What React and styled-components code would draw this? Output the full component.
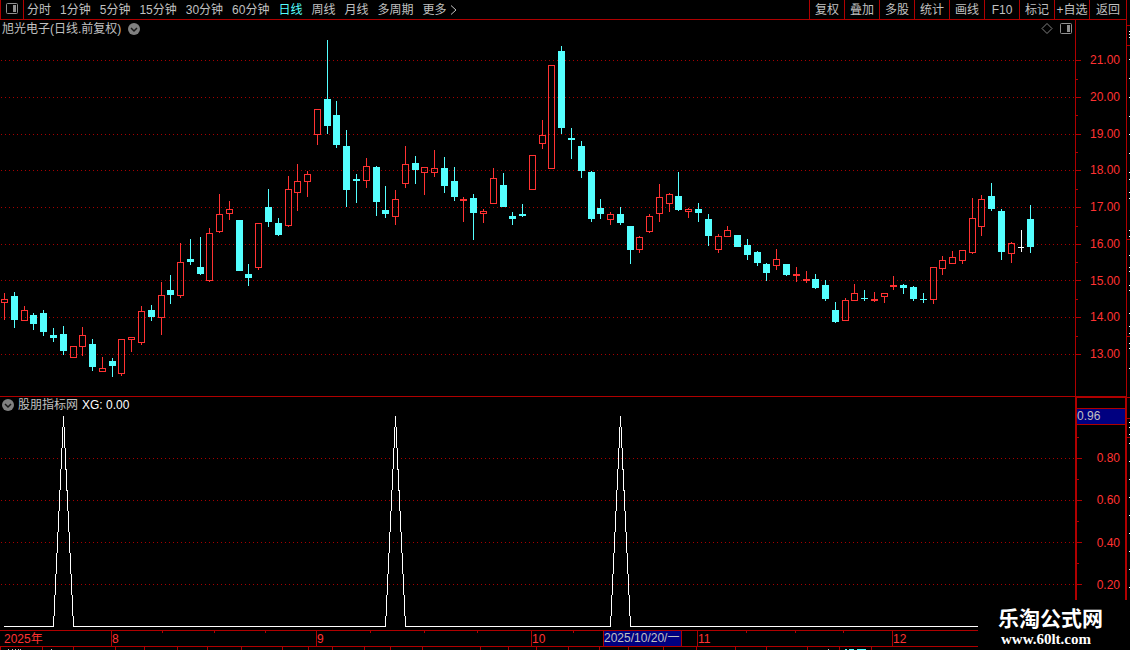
import React, { Component } from 'react'
import styled, { createGlobalStyle, css } from 'styled-components'

const periods = ['分时', '1分钟', '5分钟', '15分钟', '30分钟', '60分钟', '日线', '周线', '月线', '多周期', '更多']
const tools = ['复权', '叠加', '多股', '统计', '画线', 'F10', '标记', '+自选', '返回']

const line = '#b00000'
const red = '#ff3232'
const cyan = '#54ffff'
const gray = '#c0c0c0'

// x, high, body top, body bottom, low, kind (u = up, d = down, f = flat)
const candles = [
  [4, 293, 299, 303, 320, 'u'], [14, 292, 296, 320, 328, 'd'], [24, 306, 310, 321, 321, 'u'],
  [33, 313, 315, 324, 330, 'd'], [43, 310, 313, 332, 336, 'd'], [53, 328, 335, 338, 342, 'd'],
  [63, 326, 334, 351, 355, 'd'], [73, 346, 346, 358, 358, 'u'], [82, 327, 335, 347, 356, 'u'],
  [92, 339, 344, 367, 371, 'd'], [102, 357, 368, 372, 372, 'u'], [112, 358, 361, 366, 377, 'd'],
  [121, 339, 339, 374, 376, 'u'], [131, 337, 337, 340, 352, 'u'], [141, 306, 311, 343, 345, 'u'],
  [151, 305, 310, 317, 321, 'd'], [161, 282, 295, 318, 335, 'u'], [170, 275, 290, 295, 304, 'd'],
  [180, 243, 262, 296, 298, 'u'], [190, 239, 259, 262, 265, 'd'], [200, 237, 267, 274, 275, 'd'],
  [209, 228, 233, 281, 282, 'u'], [219, 194, 214, 232, 233, 'u'], [229, 201, 209, 214, 220, 'u'],
  [239, 220, 220, 271, 271, 'd'], [248, 264, 274, 278, 286, 'd'], [258, 223, 223, 268, 270, 'u'],
  [268, 189, 207, 222, 227, 'd'], [278, 218, 223, 235, 236, 'd'], [288, 176, 189, 226, 227, 'u'],
  [297, 164, 181, 193, 211, 'u'], [307, 171, 174, 182, 197, 'u'], [317, 109, 109, 135, 145, 'u'],
  [327, 40, 99, 126, 134, 'd'], [336, 101, 115, 145, 148, 'd'], [346, 130, 146, 190, 207, 'd'],
  [356, 174, 179, 181, 203, 'd'], [366, 158, 166, 181, 188, 'u'], [376, 166, 167, 202, 216, 'd'],
  [385, 186, 210, 214, 218, 'd'], [395, 190, 199, 217, 225, 'u'], [405, 146, 164, 184, 188, 'u'],
  [415, 156, 163, 170, 184, 'd'], [424, 167, 167, 173, 195, 'u'], [434, 150, 168, 173, 177, 'u'],
  [444, 157, 168, 186, 193, 'd'], [454, 167, 181, 197, 201, 'd'], [463, 197, 199, 201, 222, 'u'],
  [473, 194, 198, 213, 240, 'd'], [483, 209, 211, 214, 223, 'u'], [493, 168, 178, 204, 204, 'u'],
  [503, 173, 185, 207, 207, 'd'], [512, 212, 216, 219, 225, 'd'], [522, 204, 214, 216, 217, 'd'],
  [532, 155, 155, 190, 190, 'u'], [542, 120, 135, 144, 149, 'u'], [551, 65, 65, 169, 169, 'u'],
  [561, 46, 51, 128, 134, 'd'], [571, 128, 138, 140, 159, 'd'], [581, 141, 146, 171, 178, 'd'],
  [591, 171, 172, 219, 222, 'd'], [600, 199, 208, 214, 219, 'd'], [610, 212, 214, 220, 225, 'u'],
  [620, 207, 214, 223, 225, 'd'], [630, 226, 226, 250, 264, 'd'], [639, 236, 237, 250, 253, 'u'],
  [649, 214, 216, 232, 233, 'u'], [659, 184, 197, 214, 222, 'u'], [669, 193, 194, 204, 212, 'u'],
  [678, 172, 196, 210, 211, 'd'], [688, 208, 209, 212, 218, 'u'], [698, 203, 209, 213, 222, 'd'],
  [708, 214, 219, 236, 246, 'd'], [718, 234, 236, 250, 253, 'u'], [727, 226, 230, 237, 237, 'u'],
  [737, 235, 235, 247, 247, 'd'], [747, 239, 245, 255, 260, 'd'], [757, 251, 252, 263, 266, 'd'],
  [766, 263, 264, 273, 281, 'd'], [776, 249, 259, 266, 270, 'u'], [786, 264, 264, 275, 276, 'd'],
  [796, 267, 274, 276, 282, 'u'], [806, 271, 279, 281, 283, 'u'], [815, 274, 279, 288, 289, 'd'],
  [825, 280, 285, 299, 301, 'd'], [835, 302, 310, 322, 323, 'd'], [845, 298, 300, 321, 321, 'u'],
  [854, 284, 293, 301, 301, 'u'], [864, 290, 298, 299, 301, 'd'], [874, 292, 299, 301, 302, 'u'],
  [884, 293, 293, 297, 303, 'u'], [893, 276, 285, 287, 290, 'u'], [903, 284, 285, 288, 294, 'd'],
  [913, 286, 287, 299, 301, 'd'], [923, 293, 299, 300, 303, 'd'], [933, 267, 267, 300, 304, 'u'],
  [942, 256, 260, 269, 275, 'u'], [952, 251, 257, 264, 264, 'u'], [962, 250, 250, 261, 264, 'u'],
  [972, 198, 218, 253, 254, 'u'], [981, 195, 199, 227, 236, 'u'], [991, 183, 196, 209, 211, 'd'],
  [1001, 209, 211, 252, 260, 'd'], [1011, 242, 243, 254, 263, 'u'], [1021, 230, 247, 248, 252, 'f'],
  [1030, 205, 219, 247, 253, 'd']
]

const prices = ['21.00', '20.00', '19.00', '18.00', '17.00', '16.00', '15.00', '14.00', '13.00']
const priceGrid = [60, 97, 134, 170, 207, 244, 280, 317, 354]
const priceMinor = [79, 115, 152, 189, 226, 262, 299, 336]
const levels = ['0.80', '0.60', '0.40', '0.20']
const levelGrid = [458, 500, 542, 584]
const levelMinor = [437, 479, 521, 563]
const signal = [[4, 626], [53, 626], [63, 416], [73, 626], [385, 626], [395, 416], [405, 626], [610, 626], [620, 416], [630, 626], [1031, 626]]

const months = ['2025年', '8', '9', '10', '11', '12']
const weekTicks = [162, 214, 265, 370, 424, 477, 573, 746, 795, 843]
const footTicks = [0, 42, 73, 115, 144, 177, 207, 241, 282, 308, 332, 364, 390, 422, 480, 508, 536, 568, 599, 628, 663, 696, 735, 766, 807, 839, 871]
const sideTicks = [25, 45, 239, 336, 397, 418, 437]
const sideDots = [31, 34, 37, 59, 78, 97, 116, 134, 153, 172, 179, 192, 198, 230, 236, 255, 267, 271, 285, 290, 313, 326, 333, 343, 348, 368, 422, 427, 434, 443, 461, 479, 497, 515, 533, 551, 569, 587]

const Grid = ({ rows }) => rows.map(y => (
  <line key={y} x1='1' x2='1075' y1={y + 0.5} y2={y + 0.5} stroke='#a80000' strokeDasharray='1 3' />
))

const Candle = ({ data }) => {
  const [x, high, top, bottom, low, kind] = data
  if (kind === 'u') {
    return (
      <g fill={red}>
        <rect x={x} y={high} width='1' height={top - high} />
        <rect x={x} y={bottom} width='1' height={low - bottom} />
        <rect x={x - 2.5} y={top + 0.5} width='6' height={bottom - top - 1} fill='none' stroke={red} />
      </g>
    )
  }
  return (
    <g fill={kind === 'f' ? '#fff' : cyan}>
      <rect x={x} y={high} width='1' height={low - high} />
      <rect x={x - 3} y={top} width={kind === 'f' ? 6 : 7} height={bottom - top} />
    </g>
  )
}

const Ticks = ({ box, major, minor }) => (
  <StyledTicks viewBox={box} preserveAspectRatio='none'>
    {major.map(y => <rect key={y} x='0' y={y} width='5' height='1' />)}
    {minor.map(y => <rect key={y} x='0' y={y} width='2' height='1' />)}
  </StyledTicks>
)

const Fold = ({ label }) => (
  <IconButton aria-label={label}>
    <svg width='12' height='12' viewBox='0 0 12 12'>
      <circle cx='6' cy='6' r='6' fill='#808080' />
      <path d='M3 5l3 3 3-3' fill='none' stroke='#181818' strokeWidth='1.5' />
    </svg>
  </IconButton>
)

const PanelIcon = ({ color }) => (
  <svg width='12' height='12' viewBox='0 0 12 12'>
    <rect x='0.5' y='0.5' width='11' height='10' rx='1' fill='none' stroke={color} />
    <rect x='7' y='2' width='3' height='7' fill={color} />
  </svg>
)

class App extends Component {
  constructor (props) {
    super(props)
    this.state = { period: '日线' }
  }
  render () {
    return (
      <Screen>
        <GlobalStyle />
        <Terminal>
          <Toolbar>
            <LayoutButton aria-label='布局'><PanelIcon color='#909090' /></LayoutButton>
            <Periods>
              {periods.map(name => (
                <PeriodButton
                  key={name}
                  $active={name === this.state.period}
                  onClick={() => this.setState({ period: name })}
                >
                  {name}
                </PeriodButton>
              ))}
            </Periods>
            <More width='7' height='10' viewBox='0 0 7 10'>
              <path d='M1 0.5l5 4.5-5 4.5' fill='none' stroke={gray} />
            </More>
            <Tools>
              {tools.map(name => <ToolButton key={name}>{name}</ToolButton>)}
            </Tools>
          </Toolbar>
          <Pane>
            <Plot>
              <PriceHeader>
                <h1>旭光电子(日线.前复权)</h1>
                <Fold label='展开' />
                <Corner>
                  <IconButton aria-label='标记'>
                    <svg width='12' height='12' viewBox='0 0 12 12'>
                      <path d='M6 0.5l5 5-5 5-5-5z' fill='none' stroke='#808080' />
                    </svg>
                  </IconButton>
                  <IconButton aria-label='侧栏'><PanelIcon color='#909090' /></IconButton>
                </Corner>
              </PriceHeader>
              <Chart viewBox='0 40 1075 356' preserveAspectRatio='none'>
                <Grid rows={priceGrid} />
                {candles.map(c => <Candle key={c[0]} data={c} />)}
              </Chart>
            </Plot>
            <PriceAxis>
              <Scale>
                <Ticks box='0 20 5 376' major={priceGrid} minor={priceMinor} />
                <PriceLabels>{prices.map(p => <li key={p}>{p}</li>)}</PriceLabels>
              </Scale>
            </PriceAxis>
          </Pane>
          <IndicatorPane>
            <Plot>
              <IndicatorHeader>
                <Fold label='指标' />
                <h2>股朋指标网</h2>
                <span>XG: 0.00</span>
              </IndicatorHeader>
              <Chart viewBox='0 413 1075 217' preserveAspectRatio='none'>
                <Grid rows={levelGrid} />
                <polyline
                  points={signal.map(([x, y]) => `${x + 0.5},${y + 0.5}`).join(' ')}
                  fill='none'
                  stroke='#fff'
                  strokeLinecap='square'
                />
              </Chart>
            </Plot>
            <LevelAxis>
              <Current>0.96</Current>
              <Scale>
                <Ticks box='0 425 5 205' major={levelGrid} minor={levelMinor} />
                <LevelLabels>{levels.map(l => <li key={l}>{l}</li>)}</LevelLabels>
              </Scale>
            </LevelAxis>
          </IndicatorPane>
          <TimeAxis>
            {months.map(m => <Month key={m}>{m}</Month>)}
            <WeekTicks viewBox='0 0 1126 2' preserveAspectRatio='none'>
              {weekTicks.map(x => <rect key={x} x={x} y='0' width='1' height='2' />)}
            </WeekTicks>
            <DateBadge>2025/10/20/一</DateBadge>
          </TimeAxis>
          <Foot viewBox='0 0 1126 3' preserveAspectRatio='none'>
            {footTicks.map(x => <rect key={x} x={x} y='0' width='1' height='3' fill={line} />)}
            {[8, 12, 15, 18, 20, 51, 828].map(x => <rect key={x} x={x} y='2' width='1' height='1' fill={gray} />)}
            <path d='M845 2.5h2m2 0h5m3 0h9' stroke={cyan} />
          </Foot>
        </Terminal>
        <Side viewBox='0 0 3 650' preserveAspectRatio='none'>
          {sideTicks.map(y => <rect key={y} x='0' y={y} width='3' height='1' fill={line} />)}
          {sideDots.map(y => <rect key={y} x='2' y={y} width='1' height='1' fill='#fff' />)}
        </Side>
        <Brand>
          <strong>乐淘公式网</strong>
          <a href='#home'>www.60lt.com</a>
        </Brand>
      </Screen>
    )
  }
}

const GlobalStyle = createGlobalStyle`
  * {
    box-sizing: border-box;
  }
  body {
    margin: 0;
    background: #000;
    color: ${gray};
    font: 12px/14px "Liberation Sans", "Noto Sans CJK SC", sans-serif;
  }
  h1, h2, ul {
    margin: 0;
    padding: 0;
    font-size: 12px;
    font-weight: normal;
    list-style: none;
  }
  button {
    padding: 0;
    border: 0;
    background: none;
    color: inherit;
    font: inherit;
    white-space: nowrap;
    cursor: pointer;
  }
  svg {
    display: block;
  }
`

const Screen = styled.div`
  position: relative;
  display: flex;
  height: 100vh;
  overflow: hidden;
`

const Terminal = styled.main`
  flex: 1;
  min-width: 0;
  display: grid;
  grid-template-rows: 20px 376fr 234fr 17px 3px;
`

const Toolbar = styled.nav`
  display: flex;
  align-items: stretch;
  border-bottom: 1px solid ${line};
`

const LayoutButton = styled.button`
  display: flex;
  align-items: center;
  justify-content: center;
  width: 24px;
  padding-bottom: 2px;
  border-left: 1px solid ${line};
  border-right: 1px solid ${line};
`

const Periods = styled.div`
  display: flex;
  gap: 9px;
  padding-left: 3px;
`

const PeriodButton = styled.button`
  ${p => p.$active && css`color: ${cyan};`}
`

const More = styled.svg`
  margin-left: 3px;
  align-self: center;
`

const Tools = styled.div`
  display: flex;
  margin-left: auto;
`

const ToolButton = styled.button`
  width: 35px;
  border-left: 1px solid ${line};
  &:last-child {
    width: 37px;
  }
`

const Pane = styled.section`
  display: grid;
  grid-template-columns: 1fr 51px;
  min-height: 0;
`

const IndicatorPane = styled(Pane)`
  border-top: 1px solid ${line};
`

const Plot = styled.div`
  display: flex;
  flex-direction: column;
  min-width: 0;
  min-height: 0;
`

const PriceHeader = styled.header`
  display: flex;
  align-items: center;
  gap: 7px;
  height: 20px;
  padding: 0 3px 2px 2px;
`

const IndicatorHeader = styled.header`
  display: flex;
  align-items: center;
  gap: 4px;
  height: 16px;
  padding-left: 2px;
  span {
    color: #fff;
  }
`

const Corner = styled.div`
  display: flex;
  gap: 7px;
  margin-left: auto;
`

const IconButton = styled.button`
  display: flex;
`

const Chart = styled.svg`
  flex: 1;
  width: 100%;
  min-height: 0;
  shape-rendering: crispEdges;
`

const PriceAxis = styled.div`
  display: flex;
  flex-direction: column;
  min-height: 0;
  border-left: 1px solid ${line};
`

const LevelAxis = styled(PriceAxis)`
  border-left-width: 2px;
  border-top: 1px solid ${line};
  border-right: 1px solid ${line};
`

const Scale = styled.div`
  flex: 1;
  display: flex;
  min-height: 0;
`

const StyledTicks = styled.svg`
  width: 5px;
  height: 100%;
  fill: ${line};
  shape-rendering: crispEdges;
`

const Labels = styled.ul`
  flex: 1;
  display: flex;
  flex-direction: column;
  justify-content: space-between;
  color: ${red};
  text-align: right;
`

const PriceLabels = styled(Labels)`
  padding: 33px 6px 35px 0;
`

const LevelLabels = styled(Labels)`
  padding: 26px 5px 38px 0;
`

const Current = styled.output`
  height: 17px;
  margin-top: 10px;
  border-top: 1px solid ${line};
  border-bottom: 1px solid ${line};
  background: #000080;
`

const TimeAxis = styled.div`
  position: relative;
  display: grid;
  grid-template-columns: 111fr 205fr 215fr 166fr 195fr 234fr;
  border-top: 1px solid ${line};
  border-bottom: 1px solid ${line};
  color: ${red};
`

const Month = styled.span`
  border-left: 1px solid ${line};
  line-height: 16px;
  &:first-child {
    padding-left: 4px;
    border-left: 0;
  }
`

const WeekTicks = styled.svg`
  position: absolute;
  top: 0;
  left: 0;
  width: 100%;
  height: 2px;
  fill: ${line};
  shape-rendering: crispEdges;
`

const DateBadge = styled.time`
  position: absolute;
  top: 0;
  bottom: 0;
  left: calc(100% * 603 / 1126);
  width: 79px;
  border-left: 1px solid ${line};
  border-right: 1px solid ${line};
  background: #000080;
  color: ${gray};
  white-space: nowrap;
`

const Foot = styled.svg`
  width: 100%;
  height: 3px;
  shape-rendering: crispEdges;
`

const Side = styled.svg`
  width: 4px;
  height: 100%;
  border-left: 1px solid ${line};
  shape-rendering: crispEdges;
`

const Brand = styled.footer`
  position: absolute;
  right: 0;
  bottom: 0;
  display: flex;
  flex-direction: column;
  width: 152px;
  height: 50px;
  padding: 7px 0 0 20px;
  background: #000;
  color: #fff;
  strong {
    font-size: 21px;
    line-height: 24px;
  }
  a {
    padding-left: 3px;
    color: inherit;
    font: bold 15px/16px "Liberation Serif", serif;
    text-decoration: none;
  }
`

export default App
